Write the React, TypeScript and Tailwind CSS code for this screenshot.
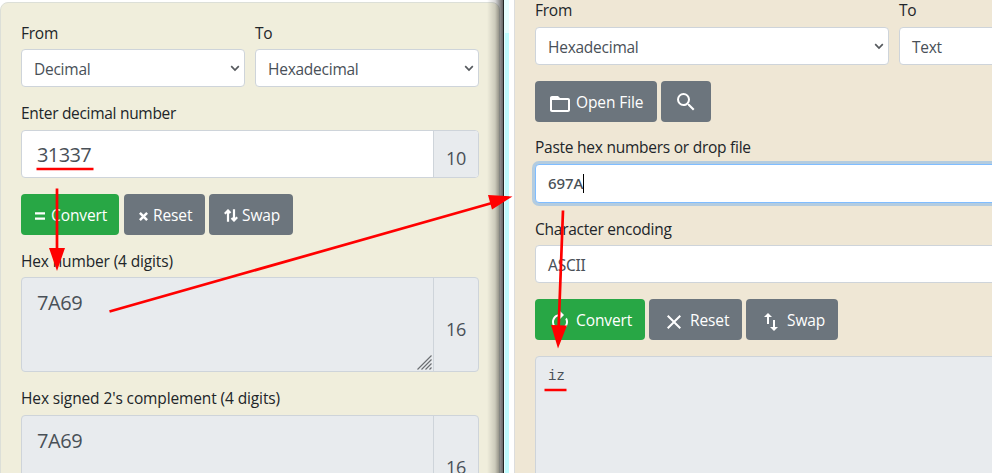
import React from "react";
import { MdFolderOpen, MdSearch, MdClose, MdAutorenew, MdSwapVert } from "react-icons/md";

function Label({ children, className = "" }: { children: React.ReactNode; className?: string }) {
  return <div className={`h-6 shrink-0 text-[15.5px] leading-[23px] whitespace-nowrap text-[#212529] ${className}`}>{children}</div>;
}

function Select({ children, className = "" }: { children: React.ReactNode; className?: string }) {
  return (
    <div className={`flex h-[38px] shrink-0 items-center justify-between rounded border border-[#ced4da] bg-white pr-1 pl-3 text-[#495057] ${className}`}>
      <span className="pt-[3px]">{children}</span>
      <svg width="10" height="7" viewBox="0 0 10 7" fill="none" stroke="#55595d" strokeWidth="1.7"><path d="M1.2 1.2 5 5l3.8-3.8" /></svg>
    </div>
  );
}

function Button({ children, className }: { children: React.ReactNode; className: string }) {
  return <div className={`flex h-[41px] shrink-0 items-center rounded pt-[2px] tracking-[-0.1px] whitespace-nowrap text-white ${className}`}>{children}</div>;
}

function Output({ grip = false }: { grip?: boolean }) {
  return (
    <div className="flex h-[95px] w-[458px] shrink-0 overflow-hidden rounded border border-[#ced4da] bg-[#e8ebee] text-[#495057]">
      <div className="relative flex-1 px-[15px] pt-[10px] text-[20px] leading-[30px] tracking-[-0.4px]">
        7A69
        {grip && (
          <svg className="absolute right-px bottom-px" width="15" height="15" viewBox="0 0 15 15" stroke="#6c6f73" strokeWidth="1.2">
            <path d="M.5 14.5l14-14M4.5 14.5l10-10M8.5 14.5l6-6M12.5 14.5l2-2" />
          </svg>
        )}
      </div>
      <div className="w-[45px] border-l border-[#ced4da] pt-[37px] text-center text-[18px] leading-[28px] tracking-[-0.4px]">16</div>
    </div>
  );
}

export default function App() {
  return (
    <div className="relative flex h-[473px] w-[992px] overflow-hidden bg-white font-['Open_Sans','Noto_Sans',sans-serif] text-[15.5px] tracking-[-0.25px]">
      <div className="relative h-full w-[503px] shrink-0 overflow-hidden pt-[2px]">
        <div className="flex h-[520px] w-[500px] flex-col rounded-lg border border-[#dcdfd8] bg-[#f0eedc] px-5 pt-[18px]">
          <div className="flex gap-[10px]">
            <div className="w-[224px]"><Label className="mb-1 pt-px">From</Label><Select>Decimal</Select></div>
            <div className="w-[224px]"><Label className="mb-1 pt-px">To</Label><Select>Hexadecimal</Select></div>
          </div>
          <Label className="mt-[15px] mb-1 tracking-[-0.3px]">Enter decimal number</Label>
          <div className="flex h-12 w-[458px] shrink-0 overflow-hidden rounded border border-[#ced4da] bg-white text-[#495057]">
            <div className="flex-1 px-[15px] pt-[9px] text-[20px] leading-[30px] tracking-[-0.6px]">31337</div>
            <div className="w-[45px] border-l border-[#ced4da] bg-[#e8ebee] pt-[13px] text-center text-[18px] leading-[28px] tracking-[-0.4px]">10</div>
          </div>
          <div className="mt-4 flex">
            <Button className="mr-[5px] w-[98px] bg-[#28a745] pl-[14px]">
              <svg className="mt-px mr-[6px]" width="10" height="8"><path d="M0 1.3h10M0 6.7h10" stroke="white" strokeWidth="2.2" /></svg>Convert
            </Button>
            <Button className="mr-1 w-[81px] bg-[#6c757d] pl-[15px]">
              <svg className="mt-px mr-[5px]" width="9" height="9"><path d="M.9.9l7.2 7.2M8.1.9.9 8.1" stroke="white" strokeWidth="2.5" /></svg>Reset
            </Button>
            <Button className="w-[84px] bg-[#6c757d] pl-[15px]">
              <svg className="mr-1" width="14" height="13" viewBox="0 0 14 13" fill="none" stroke="white" strokeWidth="2.2"><path d="M4 12.8V1.500M.8 4.700l3.200-3.200 2.500 2.500M10 .2v11.300M7.500 9l2.500 2.500 3.200-3.200" /></svg>Swap
            </Button>
          </div>
          <Label className="mt-[15px] mb-[3px] tracking-[-0.14px]">Hex number (4 digits)</Label>
          <Output grip />
          <Label className="mt-[15px] mb-1 tracking-[-0.12px]">Hex signed 2's complement (4 digits)</Label>
          <Output />
        </div>
        <div className="absolute top-0 right-0 h-full w-[16px] bg-linear-to-r from-transparent via-black/15 to-black/60" />
      </div>
      <div className="w-[1px] shrink-0 bg-[#222627]" />
      <div className="w-[1px] shrink-0 bg-[#e8ffff]" />
      <div className="w-[4px] shrink-0 bg-[#bffcff]"><div className="h-[33px] bg-[#e6feff]" /></div>
      <div className="w-[5px] shrink-0 bg-white" />
      <div className="h-full w-[478px] shrink-0 overflow-hidden border-l border-[#dcdddd] bg-[#efe7d5] pl-5">
        <div className="-mt-px flex h-[520px] w-[718px] flex-col">
          <div className="flex gap-[10px]">
            <div className="w-[354px]"><Label className="mb-1">From</Label><Select>Hexadecimal</Select></div>
            <div className="w-[354px]"><Label className="mb-1">To</Label><Select>Text</Select></div>
          </div>
          <div className="mt-4 flex gap-1">
            <Button className="w-[122px] bg-[#6c757d] pl-[13px]"><MdFolderOpen className="mt-[2px] mr-1" size={24} />Open File</Button>
            <Button className="w-[50px] bg-[#6c757d] pl-[13px]"><MdSearch className="mb-px" size={24} /></Button>
          </div>
          <Label className="mt-[14px] mb-1">Paste hex numbers or drop file</Label>
          <div className="flex h-[39px] shrink-0 items-center rounded border border-[#80bdff] bg-white pl-3 font-['Noto_Sans'] text-[15px] font-medium text-[#495057] ring-3 ring-[#007bff]/25">
            <span className="tracking-[-0.1px]">697A</span><span className="h-[19px] w-px bg-black" />
          </div>
          <Label className="mt-[15px] mb-[3px]">Character encoding</Label>
          <Select className="font-['Noto_Sans']">ASCII</Select>
          <div className="mt-4 flex gap-1">
            <Button className="w-[110px] bg-[#28a745] pl-[13px]"><MdAutorenew className="mt-[2px] mr-1" size={24} />Convert</Button>
            <Button className="w-[93px] bg-[#6c757d] pl-[13px]"><MdClose className="mt-[2px] mr-1" size={24} />Reset</Button>
            <Button className="w-[92px] bg-[#6c757d] pl-[13px]"><MdSwapVert className="mt-[2px] mr-1" size={24} />Swap</Button>
          </div>
          <div className="mt-4 flex-1 rounded border border-[#ced4da] bg-[#e8ebee] pt-[7px] pl-3 font-['Liberation_Mono',monospace] text-[14px] leading-[24px] tracking-normal text-[#495057]">iz</div>
        </div>
      </div>
      <svg className="pointer-events-none absolute inset-0" width="992" height="473" fill="red" stroke="red">
        <g strokeWidth="2.7">
          <path d="M36.5 169h57M544.5 390h22M57 188.5V250M109.5 311.5 492 203M563 210.500 558.700 326" />
        </g>
        <g stroke="none"><path d="M49 248h16l-8 23zM488 195l24.500 1.500-20.500 13zM551 325l16 .5-9 23z" /></g>
      </svg>
    </div>
  );
}
